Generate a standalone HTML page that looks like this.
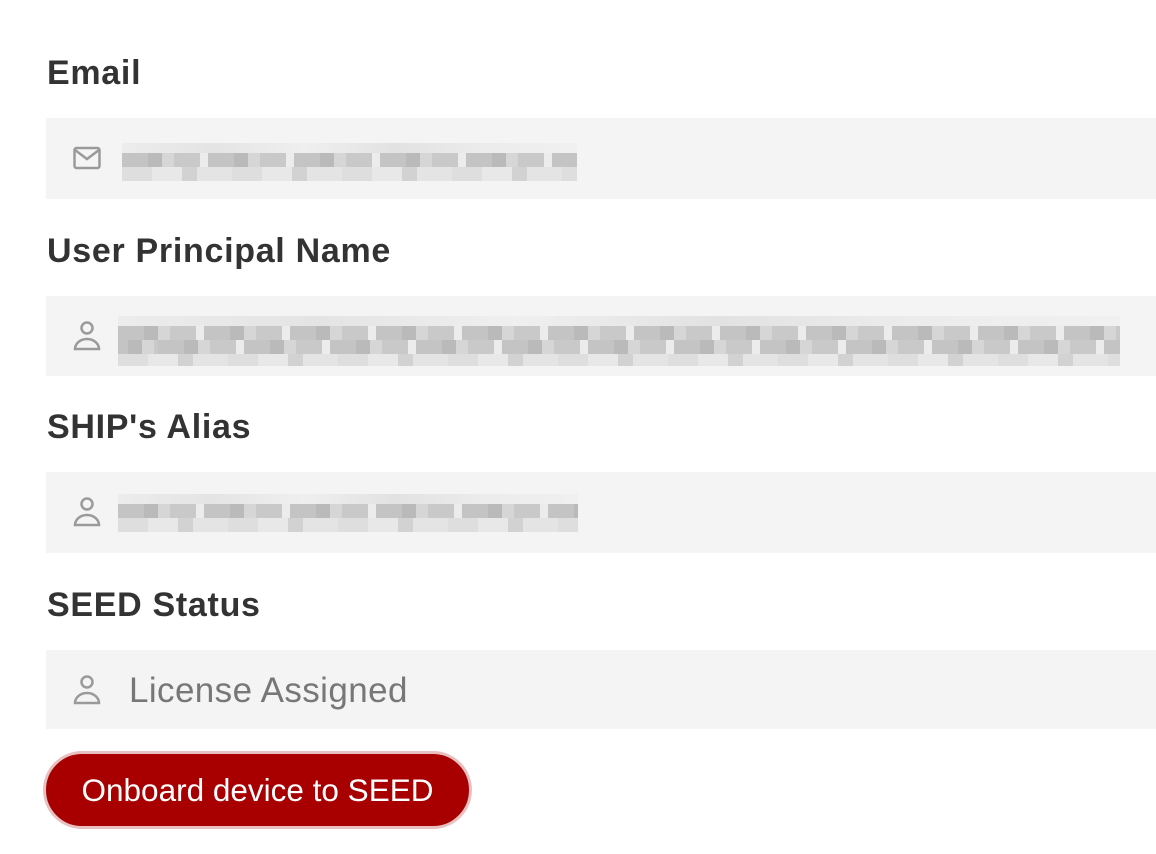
<!DOCTYPE html>
<html><head><meta charset="utf-8"><style>
body{margin:0;background:#fff;width:1156px;height:854px;overflow:hidden;font-family:"Liberation Sans",sans-serif;position:relative}
.l{position:absolute;left:47px;font-weight:bold;font-size:34px;letter-spacing:0.7px;color:#333;line-height:1}
.f{position:absolute;left:46px;width:1110px;background:#f4f4f4}
.ic{position:absolute;left:72px}
.b{position:absolute;height:14px}
.r1{background:linear-gradient(90deg,#ececec,#e4e4e4 20%,#efefef 40%,#e2e2e2 60%,#ececec 80%,#f0f0f0)}
.r2{background:repeating-linear-gradient(90deg,#c4c4c4 0 26px,#bababa 26px 40px,#d6d6d6 40px 52px,#c9c9c9 52px 78px,#ececec 78px 86px)}
.r3{background:repeating-linear-gradient(90deg,#dedede 0 30px,#e8e8e8 30px 60px,#d2d2d2 60px 75px,#e4e4e4 75px 110px)}
</style></head><body>
<div class="l" style="top:56px">Email</div>
<div class="f" style="top:118px;height:81px"></div>
<svg class="ic" style="top:145px" width="30" height="26" viewBox="0 0 30 26"><rect x="2.5" y="3" width="25" height="20" rx="2" fill="none" stroke="#9a9a9a" stroke-width="2.5"/><path d="M3 5 L15 14 L27 5" fill="none" stroke="#9a9a9a" stroke-width="2.5"/></svg>
<div class="b r1" style="left:122px;top:143px;width:455px;height:10px"></div>
<div class="b r2" style="left:122px;top:153px;width:455px"></div>
<div class="b r3" style="left:122px;top:167px;width:455px"></div>

<div class="l" style="top:234px">User Principal Name</div>
<div class="f" style="top:296px;height:80px"></div>
<svg class="ic" style="top:320px" width="30" height="32" viewBox="0 0 30 32"><circle cx="15" cy="8" r="5.5" fill="none" stroke="#9a9a9a" stroke-width="2.5"/><path d="M3 29 L27 29 A12 10 0 0 0 3 29 Z" fill="none" stroke="#9a9a9a" stroke-width="2.5"/></svg>
<div class="b r1" style="left:118px;top:316px;width:1002px;height:10px"></div>
<div class="b r2" style="left:118px;top:326px;width:1002px"></div>
<div class="b r2" style="left:118px;top:340px;width:1002px;background-position:40px 0"></div>
<div class="b r3" style="left:118px;top:354px;width:1002px;height:12px"></div>

<div class="l" style="top:410px">SHIP's Alias</div>
<div class="f" style="top:472px;height:81px"></div>
<svg class="ic" style="top:496px" width="30" height="32" viewBox="0 0 30 32"><circle cx="15" cy="8" r="5.5" fill="none" stroke="#9a9a9a" stroke-width="2.5"/><path d="M3 29 L27 29 A12 10 0 0 0 3 29 Z" fill="none" stroke="#9a9a9a" stroke-width="2.5"/></svg>
<div class="b r1" style="left:118px;top:494px;width:460px;height:10px"></div>
<div class="b r2" style="left:118px;top:504px;width:460px"></div>
<div class="b r3" style="left:118px;top:518px;width:460px"></div>

<div class="l" style="top:588px">SEED Status</div>
<div class="f" style="top:650px;height:79px"></div>
<svg class="ic" style="top:674px" width="30" height="32" viewBox="0 0 30 32"><circle cx="15" cy="8" r="5.5" fill="none" stroke="#9a9a9a" stroke-width="2.5"/><path d="M3 29 L27 29 A12 10 0 0 0 3 29 Z" fill="none" stroke="#9a9a9a" stroke-width="2.5"/></svg>
<div style="position:absolute;left:129px;top:670px;font-size:35px;letter-spacing:0.4px;color:#777;line-height:1.2">License Assigned</div>

<div style="position:absolute;left:43px;top:751px;width:423px;height:72px;border:3px solid #e8c0c0;border-radius:40px;background:#a80000;color:#fff;font-size:31.5px;line-height:72px;text-align:center">Onboard device to SEED</div>
</body></html>
